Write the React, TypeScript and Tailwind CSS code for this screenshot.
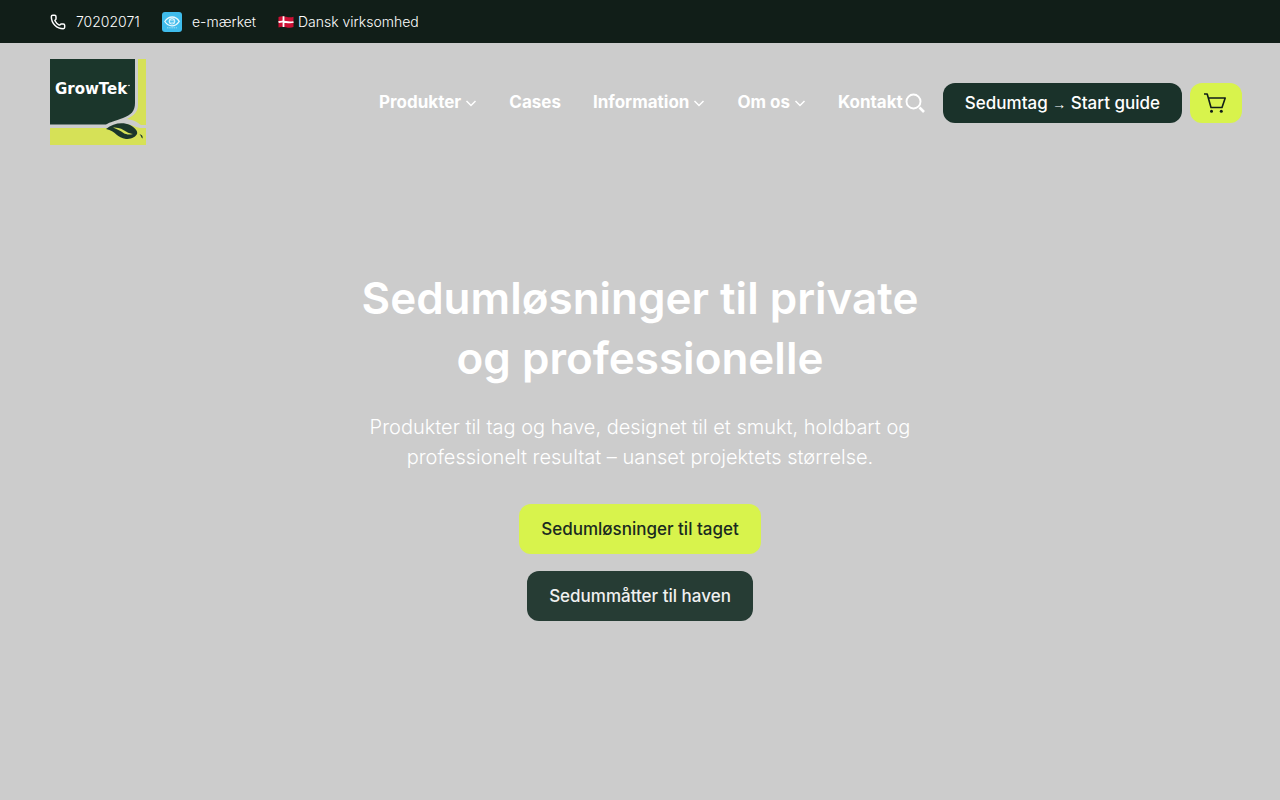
import React from "react";
import { Phone } from "lucide-react";

const navItems = [
  { label: "Produkter", hasMenu: true },
  { label: "Cases", hasMenu: false },
  { label: "Information", hasMenu: true },
  { label: "Om os", hasMenu: true },
  { label: "Kontakt", hasMenu: false },
];

const EmaerketBadge: React.FC = () => (
  <svg className="size-5" viewBox="0 0 20 20" aria-hidden="true">
    <rect width="20" height="20" rx="3" fill="#3fbcec" />
    <path
      d="M2.8 9.500C5 6.200 7.300 5 10.200 5s5.200 1.500 7 4.300c-2 3.200-4.300 4.500-7.200 4.500S4.700 12.300 2.800 9.500Z"
      fill="none"
      stroke="#e9f8fe"
      strokeWidth="1.300"
    />
    <circle cx="10" cy="9.300" r="3.300" fill="#d3f0fb" />
    <path
      d="M8.500 9.500h3c0-2.200-3-2.200-3 0 0 1.800 2 1.900 2.900 1"
      fill="none"
      stroke="#3fbcec"
      strokeWidth="0.900"
    />
    <path d="M5 15.800h10" stroke="#9bdcf6" strokeDasharray="1.500 0.700" />
  </svg>
);

const DanishFlag: React.FC = () => (
  <svg className="h-3 w-4" viewBox="0 0 16 12" aria-hidden="true">
    <path
      d="M0.500 1C3 -0.200 5 0 8 0.800s5 0.700 7.500 0V11c-2.500 1-5 0.900-7.500 0.200S3 10.500 0.500 11.500Z"
      fill="#cc1034"
    />
    <path
      d="M5.500 0.300v10.700M0.500 6.200C3 5.200 5 5.400 8 6s5 0.700 7.500 0"
      fill="none"
      stroke="#fff"
      strokeWidth="1.800"
    />
  </svg>
);

const Logo: React.FC = () => (
  <svg className="h-[86px] w-24" viewBox="0 0 96 86" role="img" aria-label="GrowTek">
    <path d="M0 0h85v44c0 8-4 12-12 15-8 3-13 4-17 6.500H0Z" fill="#1b362b" />
    <path d="M88 0h8v66h-5c-4-3-7-5-14-6 8-4 11-8 11-14Z" fill="#d6e157" />
    <path d="M0 69h58c8-5 20-5 28-1l4 1h6v17H0Z" fill="#d6e157" />
    <path
      d="M56 70c7-6 17-7 24-4 6 3 8 7 7 9-2 4-7 5-11 5-9-1-10-8-20-10Z"
      fill="#1b362b"
    />
    <path
      d="M63 68.500c6-0.500 10 2 13 4 3 2 5 2 7 2.500-4 1-7 0.500-9.500-1-3.500-2.500-6.500-4-10.500-5.500Z"
      fill="#d6e157"
    />
    <path d="M89.500 75.500c3 0 3.500 2.500 3 4-1.500-1-1-2.500-3-4Z" fill="#1b362b" />
    <text
      x="5"
      y="35"
      fill="#fff"
      className="font-['DejaVu_Sans',sans-serif] text-[15px] font-bold"
    >
      GrowTek
    </text>
    <circle cx="79" cy="26.500" r="0.800" fill="#fff" />
  </svg>
);

const Chevron: React.FC = () => (
  <svg
    className="mt-0.5 size-3"
    viewBox="0 0 12 12"
    fill="none"
    stroke="currentColor"
    strokeWidth="1.500"
    aria-hidden="true"
  >
    <path d="m1.500 4 4.500 4.500L10.500 4" />
  </svg>
);

const SearchIcon: React.FC = () => (
  <svg className="size-5" viewBox="0 0 20 20" fill="none" stroke="currentColor" aria-hidden="true">
    <circle cx="8.500" cy="8.500" r="7" strokeWidth="1.900" />
    <path d="m14.500 14.500 4.500 4.500" strokeWidth="2.600" />
  </svg>
);

const CartIcon: React.FC = () => (
  <svg
    className="h-5 w-6"
    viewBox="0 0 24 20"
    fill="none"
    stroke="currentColor"
    strokeWidth="1.600"
    aria-hidden="true"
  >
    <path d="M0 1h3.200L7 14.500h11L21.200 5H4.500" strokeLinejoin="round" />
    <circle cx="7.500" cy="18.300" r="1.500" fill="currentColor" stroke="none" />
    <circle cx="17.300" cy="18.300" r="1.500" fill="currentColor" stroke="none" />
  </svg>
);

const TopBar: React.FC = () => (
  <div className="flex h-[43px] items-center gap-5 bg-[#111e18] px-[50px] text-sm font-light text-white">
    <a href="tel:70202071" className="flex min-w-[92px] items-center gap-2.5">
      <Phone className="size-4" strokeWidth={2.2} />
      70202071
    </a>
    <a href="#emaerket" className="flex min-w-24 items-center gap-2.5">
      <EmaerketBadge />
      e-mærket
    </a>
    <span className="flex items-center gap-1">
      <DanishFlag />
      Dansk virksomhed
    </span>
  </div>
);

const Header: React.FC = () => (
  <header className="flex items-center py-4 pr-[38px] pl-[50px]">
    <a href="#">
      <Logo />
    </a>
    <nav className="ml-auto flex items-center gap-8 text-[17px] leading-[26px] font-bold text-white">
      {navItems.map((item) =>
        item.hasMenu ? (
          <button key={item.label} type="button" className="flex items-center gap-1">
            {item.label}
            <Chevron />
          </button>
        ) : (
          <a key={item.label} href="#">
            {item.label}
          </a>
        )
      )}
    </nav>
    <div className="mt-0.5 flex items-center">
      <button type="button" aria-label="Søg" className="ml-0.5 text-white">
        <SearchIcon />
      </button>
      <a
        href="#guide"
        className="ml-[18px] flex h-10 items-center rounded-xl bg-[#1a322a] px-[22px] text-[17px] leading-[26px] font-medium text-white"
      >
        <span>
          Sedumtag <span className="font-['Liberation_Sans',sans-serif] text-sm">→</span> Start
          guide
        </span>
      </a>
      <button
        type="button"
        aria-label="Kurv"
        className="ml-2 flex h-10 w-[52px] items-center justify-center rounded-xl bg-[#d8f34c] text-[#111e18]"
      >
        <CartIcon />
      </button>
    </div>
  </header>
);

const Hero: React.FC = () => (
  <section className="flex flex-col items-center px-5 pt-[107px] text-center">
    <h1 className="text-[44px] leading-[60px] font-semibold text-white">
      Sedumløsninger til private
      <br />
      og professionelle
    </h1>
    <p className="mt-6 text-xl leading-[30px] font-light text-white">
      Produkter til tag og have, designet til et smukt, holdbart og
      <br />
      professionelt resultat – uanset projektets størrelse.
    </p>
    <a
      href="#taget"
      className="mt-8 flex h-[50px] items-center rounded-xl bg-[#d8f34c] px-[22px] text-[17px] leading-[26px] font-medium text-[#1a2a20]"
    >
      Sedumløsninger til taget
    </a>
    <a
      href="#haven"
      className="mt-[17px] flex h-[50px] items-center rounded-xl bg-[#263c34] px-[22px] text-[17px] leading-[26px] font-medium text-[#f0f0f0]"
    >
      Sedummåtter til haven
    </a>
  </section>
);

export default function App() {
  return (
    <div className="min-h-screen bg-[#ccc] font-['Inter','Liberation_Sans',sans-serif]">
      <TopBar />
      <Header />
      <Hero />
    </div>
  );
}
